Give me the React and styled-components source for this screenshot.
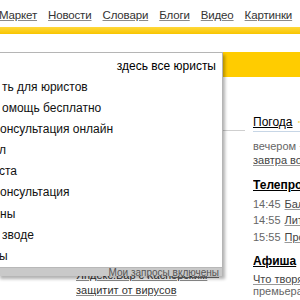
import React from 'react'
import styled, {createGlobalStyle} from 'styled-components'

const GlobalStyle = createGlobalStyle`
  html, body {
    margin: 0;
    padding: 0;
    background: #fff;
    overflow: hidden;
  }
  body {
    font-family: "Liberation Sans", Arial, sans-serif;
    color: #000;
  }
`

const Page = styled.div`
  position: relative;
  width: 300px;
  height: 300px;
  overflow: hidden;
`

const Nav = styled.nav`
  display: flex;
  gap: 11px;
  height: 27px;
  align-items: center;
  padding-top: 2px;
  margin-left: -1px;
  box-sizing: border-box;
  white-space: nowrap;
`

const NavLink = styled.a`
  font-size: 11.5px;
  letter-spacing: -0.15px;
  color: #333;
  text-decoration: underline;
  text-decoration-color: #8a8a8a;
  text-underline-offset: 1px;
`

const YellowLine = styled.div`
  height: 7px;
  background: linear-gradient(#ffd83a, #f8c500);
  margin-bottom: 18px;
`

const SearchBand = styled.div`
  height: 25px;
  background: #ffcc00;
`

const Content = styled.div`
  display: grid;
  grid-template-columns: 245px 1fr;
  column-gap: 8px;
`

const LeftColumn = styled.div`
  display: flex;
  flex-direction: column;
`

const NewsBlock = styled.div`
  height: 53px;
  border-bottom: 1px solid #cfcfcf;
`

const Promo = styled.div`
  margin-top: 137px;
  padding-left: 76px;
  display: flex;
  flex-direction: column;
  font-size: 11px;
  line-height: 15px;
  white-space: nowrap;
`

const PromoLink = styled.a`
  color: #333;
  text-decoration: underline;
  text-decoration-color: #8a8a8a;
`

const RightColumn = styled.div`
  padding-top: 37px;
  white-space: nowrap;
  overflow: hidden;
`

const Heading = styled.div`
  display: flex;
  align-items: center;
  gap: 4px;
  height: 16px;
  font-size: 12px;
  font-weight: ${p => (p.$bold ? 'bold' : 'normal')};
  margin-bottom: ${p => p.$gap || 0}px;
  border-bottom: ${p => (p.$line ? '1px solid #c7d6e6' : 'none')};
  padding-bottom: ${p => (p.$line ? 1 : 0)}px;

  a {
    color: #000;
    text-decoration: underline;
  }
`

const Line = styled.div`
  font-size: 11px;
  line-height: ${p => p.$lh || 14}px;
  color: #666;
  margin-bottom: ${p => p.$gap || 0}px;
`

const SmallLink = styled.a`
  color: #444;
  text-decoration: underline;
  text-decoration-color: #999;
`

const Time = styled.span`
  color: #666;
  margin-right: 4px;
`

const Suggest = styled.div`
  position: absolute;
  z-index: 10;
  left: -2px;
  top: 52px;
  width: 225px;
  background: #fff;
  border-top: 1px solid #b5b5b5;
  border-right: 1px solid #b5b5b5;
  box-sizing: border-box;
  box-shadow: 2px 3px 3px rgba(0, 0, 0, 0.3);
`

const Query = styled.div`
  height: 24px;
  line-height: 26px;
  padding-right: 6px;
  text-align: right;
  font-size: 12px;
  color: #000;
`

const SuggestList = styled.ul`
  list-style: none;
  margin: 0;
  padding: 0;
  height: 190px;
  overflow: hidden;
`

const SuggestItem = styled.li`
  height: 21.1px;
  line-height: 21.1px;
  padding-left: ${p => p.$indent}px;
  font-size: 12px;
  color: #111;
  white-space: nowrap;
`

const SuggestFooter = styled.div`
  height: 8px;
  line-height: 9px;
  background: #c9c9c9;
  border-top: 1px solid #b8b8b8;
  text-align: right;
  padding-right: 3px;
  font-size: 10px;
  color: #555;
  overflow: visible;

  a {
    color: #555;
    text-decoration: underline;
  }
`

const Sun = () => (
  <svg width="10" height="10" viewBox="0 0 10 10">
    <circle cx="5" cy="5" r="3" fill="#f4d24a" opacity="0.8" />
  </svg>
)

const navItems = ['Маркет', 'Новости', 'Словари', 'Блоги', 'Видео', 'Картинки']

const suggestions = [
  ['ть для юристов', 4],
  ['омощь бесплатно', 4],
  ['онсультация онлайн', 2],
  ['л', 1],
  ['ста', 1],
  ['онсультация', 2],
  ['ны', 2],
  ['зводе', 4],
  ['ы', 1],
]

export default function App() {
  return (
    <Page>
      <GlobalStyle />
      <Nav>
        {navItems.map(item => (
          <NavLink key={item} href="#">
            {item}
          </NavLink>
        ))}
      </Nav>
      <YellowLine />
      <SearchBand />
      <Content>
        <LeftColumn>
          <NewsBlock />
          <Promo>
            <PromoLink href="#">Яндекс.Бар с Касперским</PromoLink>
            <PromoLink href="#">защитит от вирусов</PromoLink>
          </Promo>
        </LeftColumn>
        <RightColumn>
          <Heading $line $gap={7}>
            <a href="#">Погода</a>
            <Sun />
          </Heading>
          <Line>вечером −</Line>
          <Line $gap={10}>
            <SmallLink href="#">завтра возможен снег</SmallLink>
          </Line>
          <Heading $bold $gap={3}>
            <a href="#">Телепрограмма</a>
          </Heading>
          <Line $lh={16.3}>
            <Time>14:45</Time>
            <SmallLink href="#">Баллада</SmallLink>
          </Line>
          <Line $lh={16.3}>
            <Time>14:55</Time>
            <SmallLink href="#">Литература</SmallLink>
          </Line>
          <Line $lh={16.3} $gap={8}>
            <Time>15:55</Time>
            <SmallLink href="#">Программа</SmallLink>
          </Line>
          <Heading $bold $gap={4}>
            <a href="#">Афиша</a>
          </Heading>
          <Line $lh={12}>
            <SmallLink href="#">Что творят мужчины</SmallLink>
          </Line>
          <Line $lh={12}>премьера</Line>
        </RightColumn>
      </Content>
      <Suggest>
        <Query>здесь все юристы</Query>
        <SuggestList>
          {suggestions.map(([text, indent]) => (
            <SuggestItem key={text} $indent={indent}>
              {text}
            </SuggestItem>
          ))}
        </SuggestList>
        <SuggestFooter>
          Мои запросы <a href="#">включены</a>
        </SuggestFooter>
      </Suggest>
    </Page>
  )
}
